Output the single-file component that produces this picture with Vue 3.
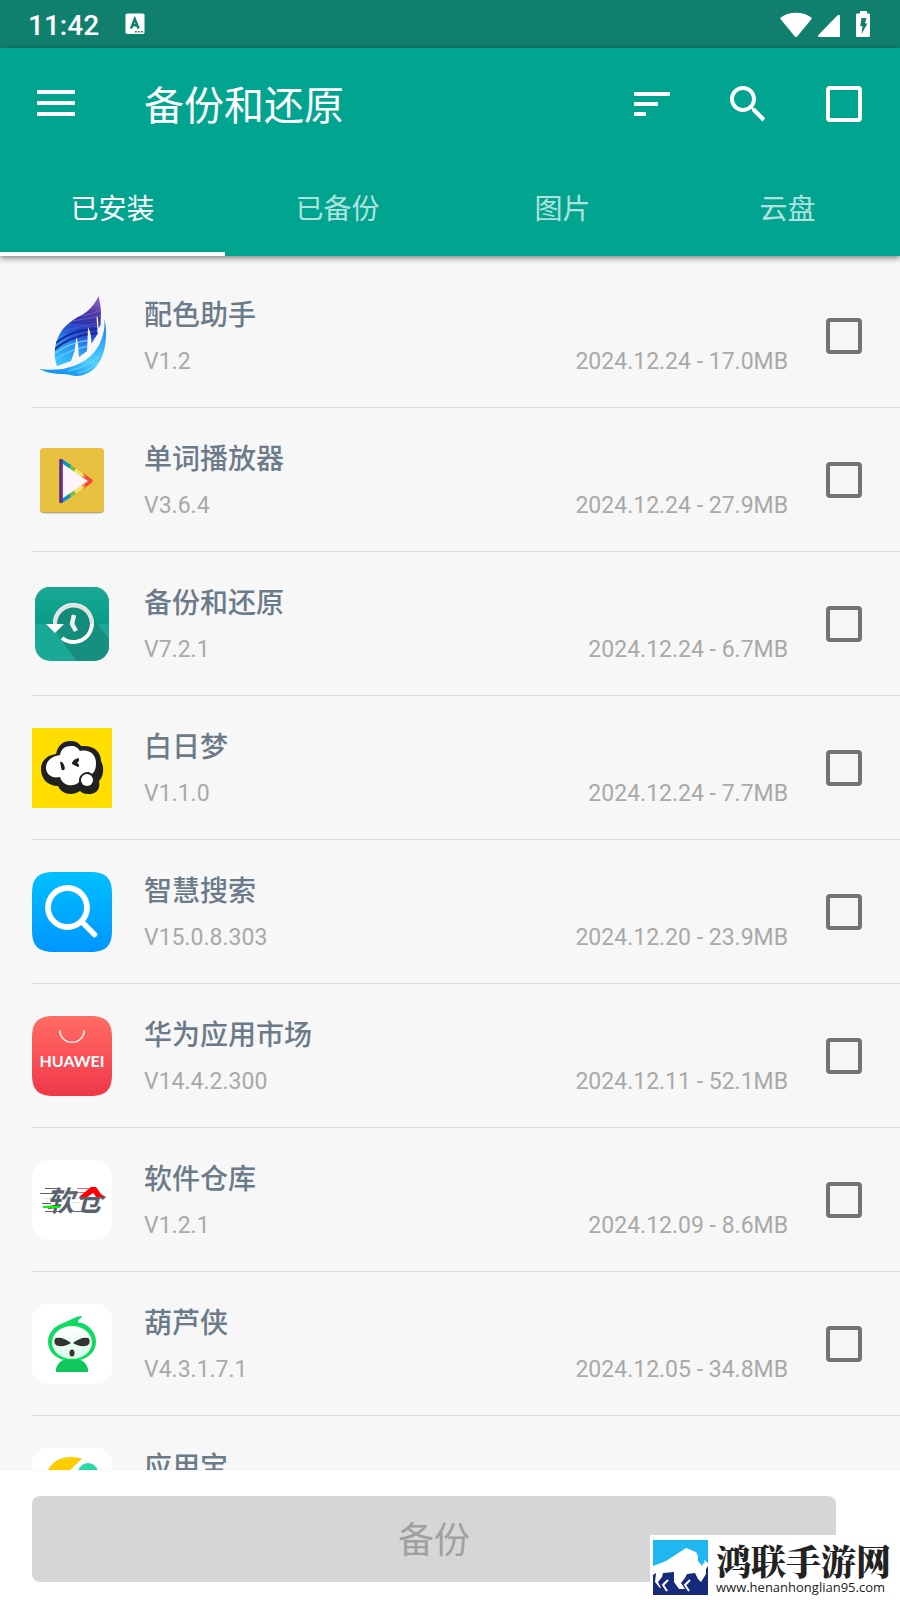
<script setup>
import { ref } from 'vue'

const tabs = ['已安装', '已备份', '图片', '云盘']
const active = ref(0)
const allChecked = ref(false)

const apps = ref([
  { icon: 'leaf', name: '配色助手', version: 'V1.2', info: '2024.12.24 - 17.0MB', checked: false },
  { icon: 'player', name: '单词播放器', version: 'V3.6.4', info: '2024.12.24 - 27.9MB', checked: false },
  { icon: 'backup', name: '备份和还原', version: 'V7.2.1', info: '2024.12.24 - 6.7MB', checked: false },
  { icon: 'dream', name: '白日梦', version: 'V1.1.0', info: '2024.12.24 - 7.7MB', checked: false },
  { icon: 'search', name: '智慧搜索', version: 'V15.0.8.303', info: '2024.12.20 - 23.9MB', checked: false },
  { icon: 'huawei', name: '华为应用市场', version: 'V14.4.2.300', info: '2024.12.11 - 52.1MB', checked: false },
  { icon: 'store', name: '软件仓库', version: 'V1.2.1', info: '2024.12.09 - 8.6MB', checked: false },
  { icon: 'gourd', name: '葫芦侠', version: 'V4.3.1.7.1', info: '2024.12.05 - 34.8MB', checked: false },
  { icon: 'yyb', name: '应用宝', version: '', info: '', checked: false }
])
</script>

<template>
  <div class="screen">
    <div class="status">
      <span class="time">11:42</span>
      <svg class="keyboard" width="20" height="22" viewBox="0 0 20 22">
        <rect x="0.5" y="0.5" width="19" height="20.5" rx="1.8" fill="#fff" />
        <path d="M6 15.5 9.8 6 13.600 15.500M7.300 12.300h5" fill="none" stroke="#107f6e" stroke-width="2.400" />
        <path d="M10 18.700h1.800M13 18.700h1.800M16 18.700h1.800" stroke="#107f6e" stroke-width="1.600" />
      </svg>
      <div class="signals">
        <svg width="32" height="26" viewBox="0 0 32 26">
          <path d="M16 26c-.6 0-1-.2-1.400-.7L.7 8.200C.2 7.500.3 6.700 1 6.200 5.400 3 10.500 1.700 16 1.700s10.600 1.300 15 4.500c.7.5.8 1.300.3 2L17.400 25.300c-.4.500-.8.7-1.400.7z" fill="#fff" />
        </svg>
        <svg width="22" height="26" viewBox="0 0 22 26">
          <path d="M20.500 4c1 0 1.500.5 1.500 1.300V26H1.200C0 26-.3 24.800.4 24L19.300 4.600c.4-.4.800-.6 1.200-.6z" fill="#fff" />
        </svg>
        <svg class="battery" width="14" height="26" viewBox="0 0 14 26">
          <path d="M4 0h7v2.500h1.500c1 0 1.500.5 1.500 1.500v20.500c0 1-.5 1.500-1.500 1.500h-11C.5 26 0 25.500 0 24.500V4c0-1 .5-1.500 1.500-1.500H4z" fill="#fff" />
          <path d="M5.500 7h5L9 12.500h2.500L5.500 23l1-8H4.300z" fill="#107f6e" />
        </svg>
      </div>
    </div>

    <header class="bar">
      <div class="toolbar">
        <button class="tool" aria-label="菜单">
          <svg width="48" height="48" viewBox="0 0 48 48"><path d="M5 12h38M5 23h38M5 34h38" stroke="#fff" stroke-width="4" /></svg>
        </button>
        <h1>备份和还原</h1>
        <div class="actions">
          <button class="tool" aria-label="排序">
            <svg width="48" height="48" viewBox="0 0 24 24"><path d="M3 18h6v-2H3v2zM3 6v2h18V6H3zm0 7h12v-2H3v2z" fill="#fff" /></svg>
          </button>
          <button class="tool" aria-label="搜索">
            <svg width="48" height="48" viewBox="0 0 24 24"><path d="M15.500 14h-.79l-.28-.27C15.410 12.590 16 11.110 16 9.500 16 5.910 13.090 3 9.500 3S3 5.910 3 9.500 5.910 16 9.500 16c1.610 0 3.090-.59 4.230-1.570l.27.28v.79l5.200 5.200L20.700 19.200l-5.200-5.200zm-6 0C7.010 14 5 11.990 5 9.500S7.010 5 9.500 5 14 7.010 14 9.500 11.990 14 9.500 14z" fill="#fff" /></svg>
          </button>
          <input v-model="allChecked" class="box light" type="checkbox" aria-label="全选">
        </div>
      </div>
      <nav class="tabs" role="tablist">
        <button
          v-for="(tab, i) in tabs"
          :key="tab"
          class="tab"
          role="tab"
          :aria-selected="active === i"
          :class="{ active: active === i }"
          @click="active = i"
        >{{ tab }}</button>
      </nav>
    </header>

    <ul class="list">
      <li v-for="(app, i) in apps" :key="app.name" class="row">
        <svg class="icon" width="80" height="80" viewBox="0 0 80 80" aria-hidden="true">
          <g v-if="app.icon === 'leaf'">
            <defs>
              <linearGradient id="leafTop" x1="0.700" y1="0" x2="0.450" y2="1">
                <stop offset="0" stop-color="#8b62c4" />
                <stop offset="0.220" stop-color="#4b35a2" />
                <stop offset="0.380" stop-color="#2c35ae" />
                <stop offset="0.550" stop-color="#2456d8" />
                <stop offset="0.700" stop-color="#2b8df0" />
                <stop offset="1" stop-color="#35c5ff" />
              </linearGradient>
              <linearGradient id="leafLow" x1="0.900" y1="0" x2="0.500" y2="1">
                <stop offset="0" stop-color="#2277e4" />
                <stop offset="0.450" stop-color="#3bb8fb" />
                <stop offset="0.700" stop-color="#4fd0ff" />
                <stop offset="1" stop-color="#1596f3" />
              </linearGradient>
              <clipPath id="leafClip">
                <path d="M66.500 0C68 6 69 12 69 17L68.500 29 66.500 32 66 22 64.500 20 65.500 38 59.500 47.500 58.500 37 56 31 55 55 47 61 46 48 44.500 40.500 42.500 55 39 65 25 70C22 62 22 52 25 44 29 33 37 25 50 19 57 15 63 8 66.500 0z" />
              </clipPath>
            </defs>
            <g clip-path="url(#leafClip)">
              <path d="M20 0h52v72H20z" fill="url(#leafTop)" />
              <g fill="none" stroke-width="0.700">
                <path d="M45 20q14 0 26-8M40 25q16-2 31-6" stroke="#7c6cd0" />
                <path d="M35 29q18 1 36-2M29 36q20-8 42-5" stroke="#5263da" />
                <path d="M24 47q18-15 45-14M22 54q18-16 46-17" stroke="#1b279b" stroke-width="2" />
                <path d="M22 58q15-12 38-14M22 64q18-12 40-15" stroke="#62c8ff" stroke-width="1.500" />
              </g>
            </g>
            <path d="M7 73C14 74 22 74 31 73 48 69 60 62 67 49 71 41 73 33 72.500 23 75 33 74.500 47 71 58 67 70 58 79 46 80 40 80 36 78 31 78 22 78 13 76 7 73z" fill="url(#leafLow)" />
            <path d="M36 75q18-3 33-16M46 77q12-2 20-11" fill="none" stroke="#7bddff" stroke-width="0.800" />
          </g>

          <g v-else-if="app.icon === 'player'">
            <rect x="8" y="10" width="64" height="64" rx="4" fill="#000" opacity="0.120" />
            <rect x="8" y="9" width="64" height="64" rx="4" fill="#bda66d" />
            <rect x="8" y="8" width="64" height="64" rx="4" fill="#e8c140" />
            <path d="M29 21v41l30-21z" fill="#fcf3fb" />
            <g fill="none" stroke-width="3.600" stroke-linecap="round">
              <path d="M51 35l8 6-8 6" stroke="#f04a36" stroke-linejoin="round" />
              <path d="M50 35l3 2M50 47l3-2" stroke="#f68a3c" stroke-linecap="butt" />
              <path d="M43 30l8 5.600M43 52l8-5.600" stroke="#f4e36c" stroke-linecap="butt" />
              <path d="M37 26l6 4M37 56l6-4" stroke="#7dbb3c" stroke-linecap="butt" />
              <path d="M29 20.500l9 6M29 61.500l9-6" stroke="#0795d2" stroke-linecap="butt" />
              <path d="M29 20.500v41" stroke="#632a87" />
            </g>
          </g>

          <g v-else-if="app.icon === 'backup'">
            <defs>
              <clipPath id="backupClip"><rect x="3" y="3" width="74" height="74" rx="15" /></clipPath>
              <linearGradient id="backupBg" x1="0" y1="0" x2="0" y2="1">
                <stop offset="0" stop-color="#1ba895" /><stop offset="1" stop-color="#079d87" />
              </linearGradient>
            </defs>
            <g clip-path="url(#backupClip)">
              <path d="M3 3h74v74H3z" fill="#1aa995" />
              <path d="M3 3h74v37H3z" fill="url(#backupBg)" />
              <path d="M55 26 77 55V77H45L22 46 28 53 44 47z" fill="#168f7f" />
              <circle cx="41.500" cy="39.500" r="18" fill="#138c7b" />
              <path d="M23 40h18v10L30 55z" fill="#168f7f" />
            </g>
            <path d="M23 41a18.500 18.500 0 1 1 7 13" fill="none" stroke="#fff" stroke-width="4" />
            <path d="M23 40a18.500 18.500 0 0 1 37 0" fill="none" stroke="#e0e3e2" stroke-width="4" />
            <path d="M14 40h18l-9 9z" fill="#fff" />
            <path d="M42 31 40 40 44 47" fill="none" stroke="#f0f2f1" stroke-width="4.500" />
          </g>

          <g v-else-if="app.icon === 'dream'">
            <path d="M0 0h80v80H0z" fill="#ffde00" />
            <path d="M24 26C26 17 31 13 38 13c5 0 8 1 11 5 12-1 20 5 20 15 4 8 2 16-2 20 2 9-4 14-11 13-4 0-6-1-8-3-7 5-18 4-22-5C15 58 9 50 9 41c0-8 6-14 15-15z" fill="#202020" />
            <path d="M28 27c1-6 5-9 11-9 5 0 7 2 9 5 10-2 16 4 16 12 0 7-2 9-4 11-5-5-14 0-13 8-5 5-16 5-19-5-8 2-14-3-14-9 0-8 7-12 14-13z" fill="#fff" />
            <circle cx="55" cy="52" r="6" fill="#fff" />
            <path d="M28 34c2-1 3 1 4 3s1 4 0 5c-2 1-3-1-3-3zM46 30c-3 1-6 3-6 6l6 3c2-1 1-3-1-4 2-1 3-4 1-5z" fill="#202020" />
          </g>

          <g v-else-if="app.icon === 'search'">
            <defs>
              <linearGradient id="searchBg" x1="0" y1="0" x2="0" y2="1">
                <stop offset="0" stop-color="#00c0ff" /><stop offset="1" stop-color="#0096ff" />
              </linearGradient>
            </defs>
            <path d="M22 0h36C74 0 80 6 80 22v36c0 16-6 22-22 22H22C6 80 0 74 0 58V22C0 6 6 0 22 0z" fill="url(#searchBg)" />
            <circle cx="35.500" cy="35.500" r="19.500" fill="none" stroke="#fff" stroke-width="5.800" />
            <path d="M50 50l12.500 12.500" stroke="#fff" stroke-width="5.500" stroke-linecap="round" />
          </g>

          <g v-else-if="app.icon === 'huawei'">
            <defs>
              <linearGradient id="huaweiBg" x1="0" y1="0" x2="0" y2="1">
                <stop offset="0" stop-color="#ff6d64" /><stop offset="0.500" stop-color="#fa5157" /><stop offset="1" stop-color="#ed384a" />
              </linearGradient>
            </defs>
            <path d="M22 0h36C74 0 80 6 80 22v36c0 16-6 22-22 22H22C6 80 0 74 0 58V22C0 6 6 0 22 0z" fill="url(#huaweiBg)" />
            <path d="M27.700 14a12.300 12.300 0 0 0 24.600 0" fill="none" stroke="#ffe9e8" stroke-width="1.600" />
            <text class="huawei" x="40" y="51" text-anchor="middle">HUAWEI</text>
          </g>

          <g v-else-if="app.icon === 'store'">
            <defs>
              <linearGradient id="roof" x1="0" y1="26" x2="0" y2="54" gradientUnits="userSpaceOnUse">
                <stop offset="0.390" stop-color="#f00" /><stop offset="0.390" stop-color="#59616e" />
              </linearGradient>
            </defs>
            <rect width="80" height="80" rx="16" fill="#fff" />
            <path d="M13 28.500h12M8 33.500h14M10 43.500h9M13 51.500h14M41 51.500h10" stroke="#59616e" />
            <path d="M45 28.500h12M44 32.500h10" stroke="#f66" />
            <path d="M12 38.500h8M42 38.500h8M40 42.500h8" stroke="#dedfe2" />
            <text class="store" x="14" y="51">软</text>
            <text class="store" x="43" y="51" fill="url(#roof)">仓</text>
            <path d="M47 37l12-10h5l7 10h-7l-4-6-6 6z" fill="#f00" />
            <path d="M11 47h17" stroke="#0f0" stroke-width="2" />
          </g>

          <g v-else-if="app.icon === 'gourd'">
            <defs>
              <linearGradient id="face" x1="0" y1="0" x2="0" y2="1">
                <stop offset="0" stop-color="#fff" /><stop offset="1" stop-color="#d9fae7" />
              </linearGradient>
            </defs>
            <rect width="80" height="80" rx="15" fill="#fff" />
            <path d="M24 68c0-6 3-10 8-12-9-2-16-9-16-18 0-8 5-14 11-17l13-6c4-2 7-3 10-3l-1 2c-2 1-3 2-3 4 1 1 2 1 4 1 8 3 14 10 14 19s-7 16-16 18c5 2 8 6 8 12z" fill="#0edb61" />
            <path d="M24 68c0-6 3-10 8-12h16c5 2 8 6 8 12z" fill="#0fc75b" />
            <ellipse cx="40" cy="38.500" rx="20" ry="16.500" fill="url(#face)" />
            <path d="M24 34c5-1 10 1 15 5-4 3-13 5-16 1-1-2-1-5 1-6zM56 34c-5-1-10 1-15 5 4 3 13 5 16 1 1-2 1-5-1-6z" fill="#333" />
            <ellipse cx="40" cy="49" rx="2.500" ry="3.500" fill="#333" />
          </g>

          <g v-else>
            <rect width="80" height="80" rx="15" fill="#fff" />
            <path d="M14 26C19 14 28 9 39 9c5 0 8 1 11 1.500L34 26z" fill="#fc0" />
            <circle cx="56" cy="25" r="10" fill="#2bd6a7" />
          </g>
        </svg>

        <label class="text" :for="'app-' + i">
          <span class="name">{{ app.name }}</span>
          <span class="meta">
            <span>{{ app.version }}</span>
            <span>{{ app.info }}</span>
          </span>
        </label>
        <input :id="'app-' + i" v-model="app.checked" class="box" type="checkbox">
      </li>
    </ul>

    <footer class="footer">
      <button class="backup" disabled>备份</button>
    </footer>

    <a class="mark" href="#">
      <svg width="55" height="55" viewBox="0 0 55 55" aria-hidden="true">
        <path d="M0 0h55v28H0z" fill="#20b7f0" />
        <path d="M0 26h55v29H0z" fill="#172b7b" />
        <path d="M0 26 13 21 33 8l10 4 2 4v5l4 5 2-6 4 3v3l-2 3v5l-5 8-3-3-3-6-8 1-2 4-4 5 4 6h-6l-5-7v-10l-11 1-1 4-4 5 3 6H7l-5-6 1-9-3 2z" fill="#fff" />
        <path d="M49 12c-3 1-4 4-3 7l4 5 2-2c-3-3-1-5-3-10z" fill="#20b7f0" />
        <path d="M14 40 9 45l4 6M36 40l-5 5 4 6" fill="none" stroke="#172b7b" stroke-width="1" />
        <path d="M15 40 10 45l4 6M37 40l-5 5 4 6" fill="none" stroke="#fff" stroke-width="2" />
      </svg>
      <span class="marktext">
        <strong>鸿联手游网</strong>
        <span>www.henanhonglian95.com</span>
      </span>
    </a>
  </div>
</template>

<style>
body {
  margin: 0;
}
</style>

<style scoped>
.screen {
  position: relative;
  display: flex;
  flex-direction: column;
  height: 100vh;
  overflow: hidden;
  background: #f7f7f7;
  font-family: Roboto, "Noto Sans CJK SC", sans-serif;
}
button {
  padding: 0;
  border: 0;
  background: none;
  font: inherit;
  color: inherit;
}
.status {
  display: flex;
  align-items: center;
  box-sizing: border-box;
  height: 48px;
  padding: 0 30px 0 28px;
  background: #107f6e;
  color: #fff;
}
.time {
  padding-top: 4px;
  font-size: 28px;
  font-weight: 500;
  line-height: 44px;
}
.keyboard {
  margin-left: 26px;
}
.signals {
  display: flex;
  gap: 6px;
  margin-left: auto;
}
.battery {
  margin-left: 10px;
}
.bar {
  position: relative;
  background: #01a48f;
  color: #fff;
  box-shadow: 0 2px 6px rgba(0, 0, 0, 0.5);
}
.toolbar {
  display: flex;
  align-items: center;
  height: 112px;
  padding: 0 38px 0 32px;
}
.tool svg {
  display: block;
}
h1 {
  margin: 0 0 0 64px;
  padding-top: 6px;
  font-size: 40px;
  font-weight: 400;
  line-height: 56px;
}
.actions {
  display: flex;
  align-items: center;
  gap: 48px;
  margin-left: auto;
}
.box {
  appearance: none;
  flex: none;
  width: 36px;
  height: 36px;
  margin: 0;
  border: 4px solid #737373;
  border-radius: 4px;
}
.box:checked {
  background: #01a48f;
}
.box.light {
  margin-left: 6px;
  border-color: #fff;
}
.tabs {
  display: flex;
}
.tab {
  flex: 1;
  height: 96px;
  border-bottom: 4px solid transparent;
  padding-top: 8px;
  font-size: 28px;
  line-height: 40px;
  color: rgba(255, 255, 255, 0.7);
}
.tab.active {
  border-color: #fff;
  color: #fff;
}
.list {
  flex: 1;
  min-height: 0;
  margin: 0;
  padding: 8px 0 0 32px;
  overflow: hidden;
  list-style: none;
}
.row {
  display: flex;
  align-items: center;
  box-sizing: border-box;
  height: 144px;
  padding-right: 38px;
  border-bottom: 1px solid #dcdcdc;
}
.icon {
  flex: none;
}
.huawei {
  font: 700 16px Lato, sans-serif;
  fill: #fff;
}
.store {
  font: italic 700 28px "Noto Sans CJK SC", sans-serif;
}
.store:first-of-type {
  fill: #59616e;
}
.text {
  flex: 1;
  display: flex;
  flex-direction: column;
  gap: 6px;
  margin: 0 38px 0 32px;
  padding-top: 6px;
}
.name {
  font-size: 28px;
  font-weight: 500;
  line-height: 40px;
  color: #6b7b89;
}
.meta {
  display: flex;
  justify-content: space-between;
  min-height: 40px;
  font-size: 23px;
  line-height: 40px;
  color: #a9a9a9;
}
.footer {
  padding: 25px 64px 18px 32px;
  border-top: 1px solid #f7f7f7;
  background: #fff;
}
.backup {
  display: block;
  width: 100%;
  height: 86px;
  padding-bottom: 4px;
  border-radius: 8px;
  background: #d6d6d6;
  font-size: 36px;
  color: #a0a0a0;
}
.mark {
  position: absolute;
  right: 0;
  bottom: 0;
  display: flex;
  align-items: center;
  gap: 8px;
  padding: 5px 9px 5px 3px;
  background: #fff;
  color: #222;
  text-decoration: none;
}
.marktext {
  display: flex;
  flex-direction: column;
}
.marktext strong {
  font: 900 35px/40px "Noto Serif CJK SC", "Noto Sans CJK SC", serif;
}
.marktext span {
  font: 500 13px/15px "Open Sans", sans-serif;
}
</style>
